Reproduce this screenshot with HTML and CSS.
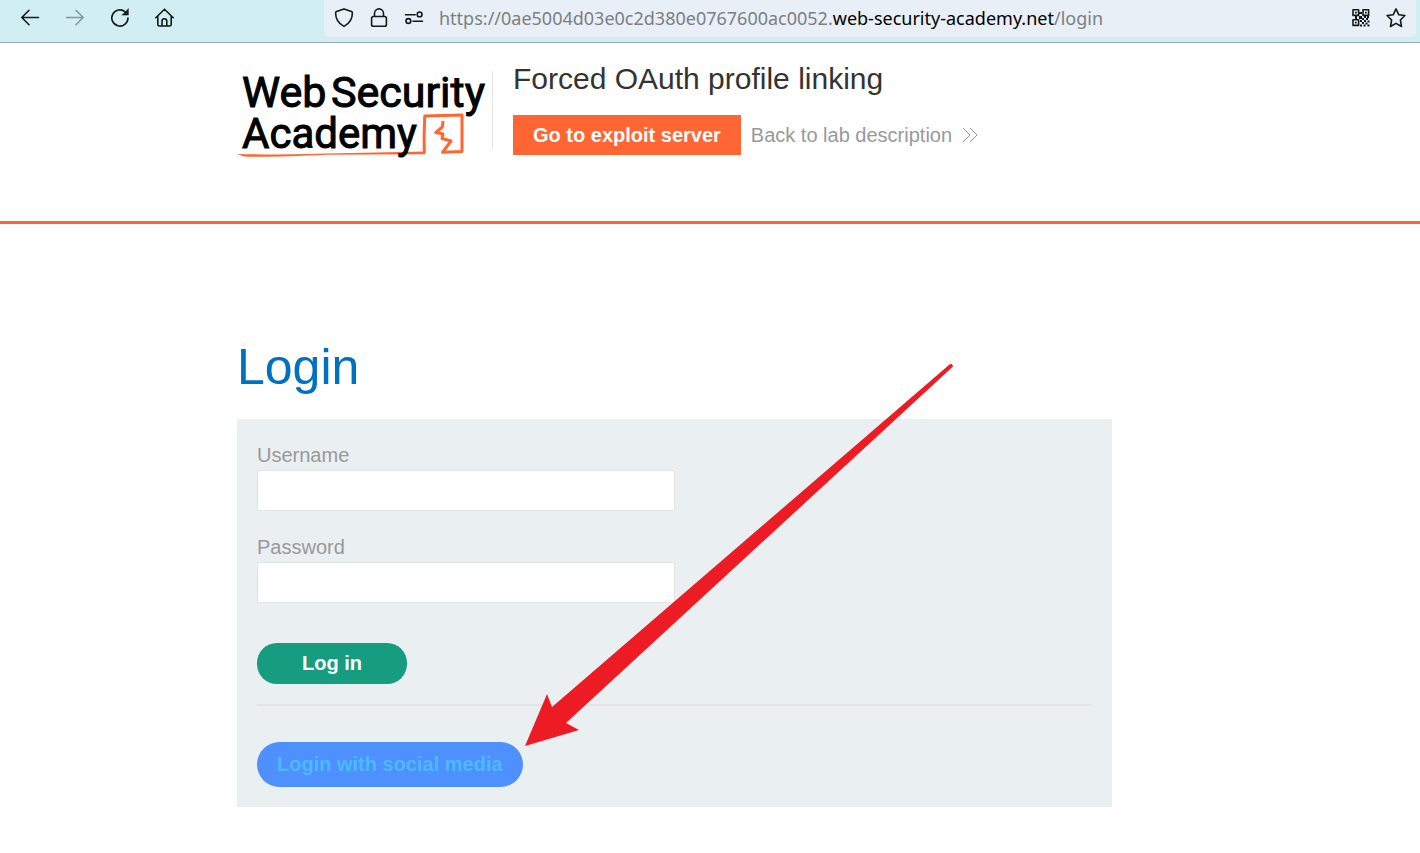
FILE: index.html
```html
<!DOCTYPE html>
<html lang="en">
<head>
<meta charset="utf-8">
<meta name="viewport" content="width=device-width, initial-scale=1">
<title>Forced OAuth profile linking</title>
<link rel="stylesheet" href="styles.css">
</head>
<body>
<div class="toolbar">
  <nav class="nav-buttons" aria-label="Browser">
    <button class="icon-button" type="button" aria-label="Back"><svg viewBox="0 0 20 20"><path d="M18.500 9.500H1.800M9 2.300 1.800 9.500 9 16.700"/></svg></button>
    <button class="icon-button icon-disabled" type="button" aria-label="Forward"><svg viewBox="0 0 20 20"><path d="M1.500 9.500h16.700M11 2.300l7.200 7.200-7.200 7.200"/></svg></button>
    <button class="icon-button" type="button" aria-label="Reload"><svg viewBox="0 0 20 20"><path d="M18 10a8.100 8.100 0 1 1-2.600-6"/><path class="solid" d="M18.400.9v6.200h-6.200z"/></svg></button>
    <button class="icon-button" type="button" aria-label="Home"><svg viewBox="0 0 20 20"><path d="M.8 9.700 9.500 1.200l8.700 8.500M2.800 8v8.400q0 1.600 1.600 1.600h10.200q1.600 0 1.600-1.600V8M7 17.800v-4.600q0-2.400 2.400-2.400t2.400 2.400v4.600"/></svg></button>
  </nav>
  <div class="address">
    <button class="icon-button" type="button" aria-label="Protection"><svg viewBox="0 0 20 20"><path d="M10 .9 17.400 3.600q1 .4 1 1.400 0 9-8.400 13.400Q1.600 14 1.600 5q0-1 1-1.400z"/></svg></button>
    <button class="icon-button" type="button" aria-label="Connection"><svg viewBox="0 0 20 20"><rect x="2.600" y="8.500" width="14.800" height="9.800" rx="1.800"/><path d="M5.500 8.300V5.400a4.500 4.500 0 0 1 9 0v2.900"/></svg></button>
    <button class="icon-button" type="button" aria-label="Permissions"><svg viewBox="0 0 20 20"><path d="M1.500 6.800h9.700M9 13.200h9.500"/><circle cx="15.600" cy="6.400" r="2.400"/><circle cx="4.400" cy="13" r="2.400"/></svg></button>
    <p class="url">https://0ae5004d03e0c2d380e0767600ac0052.<span class="domain">web-security-academy.net</span>/login</p>
    <button class="icon-button" type="button" aria-label="QR code"><svg class="qr" viewBox="0 0 20 20"><rect x="2" y="1.800" width="5.600" height="5.600"/><rect x="12" y="1.800" width="5.600" height="5.600"/><rect x="2" y="11.800" width="5.600" height="5.600"/><path class="solid" d="M4 3.800h1.700v1.700H4zM14 3.800h1.700v1.700H14zM4 13.800h1.700v1.700H4zM8 4h3v2H8zM4 8h2v3H4zM8 8h3v3H8zM13 8h2v2h-2zM16 8h2v2h-2zM11 10h2v2h-2zM15 10h2v2h-2zM9 12h2v2H9zM13 12h2v2h-2zM16.500 12.500h2v2h-2zM11 14h2v2h-2zM14.500 14.500h2v2h-2zM9 16.500h2v2H9zM12.500 16.500h2v2h-2zM16.500 16.500h2v2h-2z"/></svg></button>
    <button class="icon-button" type="button" aria-label="Bookmark"><svg viewBox="0 0 20 20"><path d="m10 .9 2.700 5.800 6.200.8-4.500 4.500 1.100 6.500L10 15.400l-5.500 3.100L5.600 12 1.100 7.500l6.200-.8z"/></svg></button>
  </div>
</div>

<header class="lab-header">
  <svg class="logo" viewBox="0 0 250 92" role="img" aria-label="Web Security Academy">
    <path class="logo-fill" d="M0 87q30 1 90-.6l98-2v2.800l-98 .6q-60 2.800-83 1.600z"/>
    <path class="logo-line" d="M187.300 86.300q-.6-20 .5-37.300l37.200-1v36.500l-19.500.8 8.500-11.300-9-2.500 1-4.500-7.200-1.500 6.500-5.500.8-6"/>
    <g class="logo-text">
      <text x="5" y="40">Web</text>
      <text x="94" y="40">Security</text>
      <text class="logo-second" x="5" y="81">Academy</text>
    </g>
  </svg>
  <div class="lab-title">
    <h2 class="title">Forced OAuth profile linking</h2>
    <div class="actions">
      <a class="exploit" href="#exploit">Go to exploit server</a>
      <a class="back" href="#lab">Back to lab description
        <svg class="chevrons" viewBox="0 0 16 16"><path d="m1 1 7 7-7 7M8 1l7 7-7 7"/></svg>
      </a>
    </div>
  </div>
</header>

<main class="content">
  <h1 class="heading">Login</h1>
  <form class="login">
    <label class="label" for="username">Username</label>
    <input class="field" id="username" type="text" name="username">
    <label class="label" for="password">Password</label>
    <input class="field" id="password" type="password" name="password">
    <button class="submit" type="submit">Log in</button>
    <hr class="rule">
    <a class="social" href="#social">Login with social media</a>
  </form>
  <svg class="arrow" viewBox="0 0 430 384" aria-hidden="true"><path d="M0 382 22 330l5 13L424.500.500q3-1.500 3.500 2L41 359l13 7z"/></svg>
</main>
</body>
</html>
```
FILE: styles.css
```css
* { box-sizing: border-box; }

body {
  margin: 0;
  background: #fff;
  color: #333332;
  font-family: "Liberation Sans", Arial, sans-serif;
  font-size: 20px;
  line-height: 24px;
}

.toolbar {
  display: flex;
  justify-content: space-between;
  height: 43px;
  padding: 0 4px 5px 20px;
  background: #d1eef2;
  border-bottom: 1px solid #9aaab0;
}

.nav-buttons {
  display: flex;
  gap: 25px;
  flex: 0 0 304px;
  height: 36px;
  align-items: center;
}

.icon-button {
  flex: none;
  width: 20px;
  height: 20px;
  padding: 0;
  border: 0;
  background: none;
}

.icon-button svg {
  display: block;
  width: 20px;
  height: 20px;
  fill: none;
  stroke: #15191a;
  stroke-width: 1.6;
  stroke-linecap: round;
  stroke-linejoin: round;
}

.icon-disabled { opacity: 0.4; }
.icon-button .solid { fill: #15191a; stroke-width: 0.5; }
.icon-button .qr .solid { stroke: none; }

.address {
  display: flex;
  flex: 1;
  align-items: center;
  gap: 15px;
  height: 37px;
  padding: 0 10px 2px;
  background: #e9eff6;
  border-radius: 0 0 5px 5px;
}

.url {
  flex: 1;
  min-width: 0;
  margin: 0;
  color: #7b7f82;
  font-family: "Noto Sans", "Open Sans", sans-serif;
  font-size: 18px;
  white-space: nowrap;
}

.domain { color: #000; }

.lab-header {
  display: flex;
  align-items: flex-start;
  height: 181px;
  padding: 24px 237px 0;
  border-bottom: 3px solid #ff6633;
}

.logo {
  flex: none;
  width: 250px;
  height: 92px;
}

.logo-text {
  font-family: Roboto, sans-serif;
  font-size: 43px;
  font-weight: 400;
  stroke: #000;
  stroke-width: 1;
}

.logo-second { font-size: 42px; }

.logo-fill { fill: #ff6633; }

.logo-line {
  fill: none;
  stroke: #ff6633;
  stroke-width: 3;
  stroke-linejoin: round;
}

.lab-title {
  height: 78px;
  margin: 4px 0 0 5px;
  padding-left: 20px;
  border-left: 1px solid #e4e4e4;
}

.title {
  margin: -10px 0 18px;
  font-size: 30px;
  font-weight: 400;
  line-height: 36px;
}

.actions {
  display: flex;
  align-items: center;
  gap: 10px;
  height: 40px;
}

.exploit {
  padding: 8px 20px;
  background: #ff6633;
  color: #fff;
  font-weight: 700;
  text-decoration: none;
}

.back {
  display: flex;
  align-items: center;
  gap: 10px;
  color: #999;
  text-decoration: none;
}

.chevrons {
  width: 16px;
  height: 16px;
  fill: none;
  stroke: #999;
}

.content {
  position: relative;
  padding: 113px 308px 46px 237px;
}

.heading {
  margin: 0 0 22px;
  color: #0071bf;
  font-size: 50px;
  font-weight: 400;
  line-height: 60px;
}

.login {
  display: flex;
  flex-direction: column;
  align-items: flex-start;
  padding: 24px 20px 20px;
  background: #eaeff2;
}

.label {
  margin-bottom: 3px;
  color: #999;
}

.field {
  width: 50%;
  height: 41px;
  margin: 0 0 24px;
  padding: 0 10px;
  border: 1px solid #e4e4e4;
  background: #fff;
  font: inherit;
}

.submit {
  width: 150px;
  height: 41px;
  margin-top: 16px;
  padding: 0 0 2px;
  border: 0;
  border-radius: 20px;
  background: #169c7f;
  color: #fff;
  font: inherit;
  font-weight: 700;
}

.rule {
  width: 100%;
  margin: 20px 0 36px;
  border: 0;
  border-top: 2px solid #e4e4e4;
}

.social {
  padding: 10px 20px 11px;
  border-radius: 23px;
  background: #4d90fe;
  color: #4dbaff;
  font-weight: 700;
  text-decoration: none;
}

.arrow {
  position: absolute;
  top: 140px;
  left: 525px;
  width: 430px;
  height: 384px;
  fill: #ed1c24;
  pointer-events: none;
}
```
